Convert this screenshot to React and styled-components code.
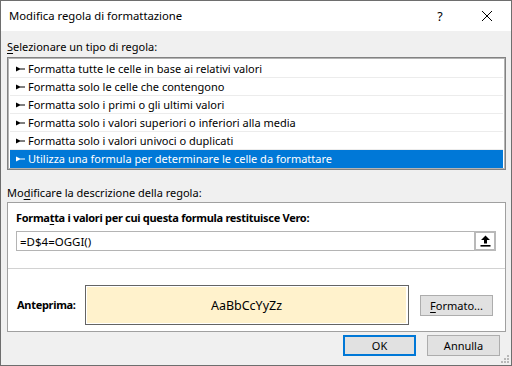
import React from "react"
import styled, { createGlobalStyle } from 'styled-components'

const rules = [
    "Formatta tutte le celle in base ai relativi valori",
    "Formatta solo le celle che contengono",
    "Formatta solo i primi o gli ultimi valori",
    "Formatta solo i valori superiori o inferiori alla media",
    "Formatta solo i valori univoci o duplicati",
    "Utilizza una formula per determinare le celle da formattare",
]

export default function App() {
    return <>
        <GlobalStyle />
        <Window>
            <TitleBar>
                <Title>Modifica regola di formattazione</Title>
                <TitleButton>?</TitleButton>
                <TitleButton>
                    <svg width="12" height="12" viewBox="0 0 12 12">
                        <path d="M1 1 L11 11 M11 1 L1 11" stroke="#000" strokeWidth="1" />
                    </svg>
                </TitleButton>
            </TitleBar>
            <Body>
                <Label top={8} bottom={2}><u>S</u>elezionare un tipo di regola:</Label>
                <RuleList>
                    {rules.map((r, i) => (
                        <RuleRow key={r} selected={i === rules.length - 1}>
                            <RuleMark viewBox="0 0 9 6" selected={i === rules.length - 1}>
                                <path d="M0 0.5 L4 2.5 L9 2.5 L9 3.6 L4 3.6 L0 5.5 Z" />
                            </RuleMark>
                            {r}
                        </RuleRow>
                    ))}
                </RuleList>
                <Label top={15} bottom={1}>Mo<u>d</u>ificare la descrizione della regola:</Label>
                <Panel>
                    <FormulaSection>
                        <Strong>Forma<u>t</u>ta i valori per cui questa formula restituisce Vero:</Strong>
                        <Field>
                            <FieldText>=D$4=OGGI()</FieldText>
                            <CollapseButton>
                                <svg width="11" height="12" viewBox="0 0 11 12">
                                    <path d="M5.5 0.5 L10 5 L7 5 L7 8.5 L4 8.5 L4 5 L1 5 Z" fill="#000" />
                                    <rect x="0.5" y="10" width="10" height="1.6" fill="#000" />
                                </svg>
                            </CollapseButton>
                        </Field>
                    </FormulaSection>
                    <PreviewSection>
                        <PreviewLabel>Anteprima:</PreviewLabel>
                        <Preview>
                            <PreviewFill>AaBbCcYyZz</PreviewFill>
                        </Preview>
                        <Button><u>F</u>ormato...</Button>
                    </PreviewSection>
                </Panel>
                <Footer>
                    <Button primary>OK</Button>
                    <Button>Annulla</Button>
                </Footer>
                <Grip viewBox="0 0 10 10">
                    {[[8, 2], [8, 5], [8, 8], [5, 5], [5, 8], [2, 8]].map(([x, y]) => (
                        <rect key={x + '-' + y} x={x - 1} y={y - 1} width="2" height="2" fill="#b8b8b8" />
                    ))}
                </Grip>
            </Body>
        </Window>
    </>
}

const GlobalStyle = createGlobalStyle`
    html, body {
        margin: 0;
        padding: 0;
        background: #fff;
    }
    body {
        font-family: "Noto Sans", "Liberation Sans", sans-serif;
        font-size: 11px;
        color: #000;
    }
    u {
        text-underline-offset: 2px;
    }
`

const Window = styled.div`
    width: 512px;
    height: 366px;
    box-sizing: border-box;
    border: 1px solid #6e6e6e;
    display: flex;
    flex-direction: column;
    background: #f0f0f0;
`

const TitleBar = styled.div`
    height: 30px;
    background: #fff;
    display: flex;
    align-items: center;
    padding-left: 8px;
`

const Title = styled.div`
    flex: 1;
    font-size: 11.3px;
    margin-top: -1px;
`

const TitleButton = styled.div`
    width: 46px;
    height: 30px;
    display: flex;
    align-items: center;
    justify-content: center;
    font-size: 12.5px;
    &:last-child {
        width: 48px;
    }
`

const Body = styled.div`
    flex: 1;
    position: relative;
    display: flex;
    flex-direction: column;
    padding: 0 5px 0 6px;
`

const Label = styled.div`
    margin-top: ${props => props.top}px;
    margin-bottom: ${props => props.bottom}px;
    height: 16px;
    line-height: 16px;
`

const RuleList = styled.div`
    background: #fff;
    border: 1px solid #828282;
    box-shadow: inset 0 0 0 1px #b4b4b4;
    padding: 2px 2px 1px 2px;
    height: 113px;
    box-sizing: border-box;
`

const RuleRow = styled.div`
    height: 18px;
    box-sizing: border-box;
    display: flex;
    align-items: center;
    padding-left: 6px;
    gap: 3px;
    border-bottom: 1px solid ${props => (props.selected ? "#0078d7" : "#ececec")};
    background: ${props => (props.selected ? "#0078d7" : "transparent")};
    color: ${props => (props.selected ? "#fff" : "#000")};
    white-space: nowrap;
`

const RuleMark = styled.svg`
    width: 9px;
    height: 6px;
    fill: ${props => (props.selected ? "#fff" : "#000")};
    flex: none;
`

const Panel = styled.div`
    background: #fff;
    border: 1px solid #a0a0a0;
    display: flex;
    flex-direction: column;
    height: 130px;
    box-sizing: border-box;
`

const FormulaSection = styled.div`
    padding: 7px 9px 0 8px;
    height: 66px;
    box-sizing: border-box;
    border-bottom: 1px solid #d2d2d2;
    display: flex;
    flex-direction: column;
    gap: 5px;
`

const Strong = styled.div`
    font-weight: bold;
    line-height: 16px;
    letter-spacing: -0.3px;
    white-space: nowrap;
`

const PreviewLabel = styled(Strong)`
    width: 68px;
    flex: none;
`

const Field = styled.div`
    height: 20px;
    box-sizing: border-box;
    border: 1px solid #b4b4b4;
    display: flex;
    align-items: center;
    justify-content: space-between;
`

const FieldText = styled.div`
    padding-left: 3px;
    font-size: 11.5px;
`

const CollapseButton = styled.div`
    width: 22px;
    height: 20px;
    box-sizing: border-box;
    margin-right: -1px;
    border: 2px solid #b9b9b9;
    background: #fff;
    display: flex;
    align-items: center;
    justify-content: center;
`

const PreviewSection = styled.div`
    flex: 1;
    display: flex;
    align-items: center;
    padding: 10px 10px 0 9px;
`

const Preview = styled.div`
    width: 324px;
    height: 40px;
    box-sizing: border-box;
    border: 1px solid #646464;
    padding: 1px 2px 1px 1px;
    margin-right: 11px;
    background: #fff;
    display: flex;
`

const PreviewFill = styled.div`
    flex: 1;
    background: #fff2cc;
    display: flex;
    align-items: center;
    justify-content: center;
    font-size: 12.5px;
`

const Button = styled.div`
    width: 73px;
    height: 21px;
    box-sizing: border-box;
    background: #e1e1e1;
    border: ${props => (props.primary ? "2px solid #0078d7" : "1px solid #adadad")};
    display: flex;
    align-items: center;
    justify-content: center;
`

const Footer = styled.div`
    display: flex;
    justify-content: flex-end;
    gap: 11px;
    padding: 3px 6px 0 0;
`

const Grip = styled.svg`
    position: absolute;
    right: 1px;
    bottom: 1px;
    width: 10px;
    height: 10px;
`
